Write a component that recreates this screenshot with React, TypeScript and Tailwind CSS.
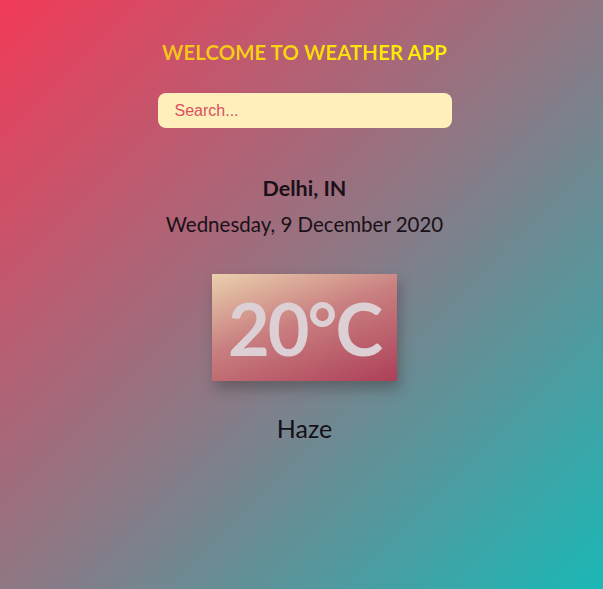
import React from "react";

export default function App() {
  return (
    <div
      className="w-[603px] h-[589px] pl-[6px] flex flex-col items-center bg-[linear-gradient(135deg,#f23a58_0%,#8f7784_50%,#1ab8b6_100%)]"
      style={{ fontFamily: "Lato, 'Open Sans', sans-serif" }}
    >
      <h1 className="mt-[39px] text-[20.5px] leading-[26px] font-bold bg-[linear-gradient(90deg,#f4c21c,#fff200)] bg-clip-text text-transparent">
        WELCOME TO WEATHER APP
      </h1>
      <input
        placeholder="Search..."
        className="mt-[28px] w-[294px] h-[35px] rounded-[8px] bg-[#ffefbb] pl-[17px] text-[16px] text-[#d94f5f] placeholder:text-[#d94f5f] outline-none"
        style={{ fontFamily: "'Liberation Sans', Arial, sans-serif" }}
      />
      <div className="mt-[47px] text-[21.5px] leading-[26px] font-bold text-[#1a1118]">Delhi, IN</div>
      <div className="mt-[10px] text-[20.5px] leading-[26px] font-normal text-[#1a1118]">
        Wednesday, 9 December 2020
      </div>
      <div className="mt-[37px] w-[185px] h-[107px] flex items-center justify-center bg-[linear-gradient(160deg,#ead0ad_0%,#c97f80_45%,#ad3f58_100%)] shadow-[3px_8px_12px_rgba(60,60,60,0.45)]">
        <span className="text-[72px] leading-none font-bold tracking-[-2px] text-[#dcd0d4]">20°C</span>
      </div>
      <div className="mt-[32px] text-[25px] leading-[30px] text-[#14101a]">Haze</div>
    </div>
  );
}
